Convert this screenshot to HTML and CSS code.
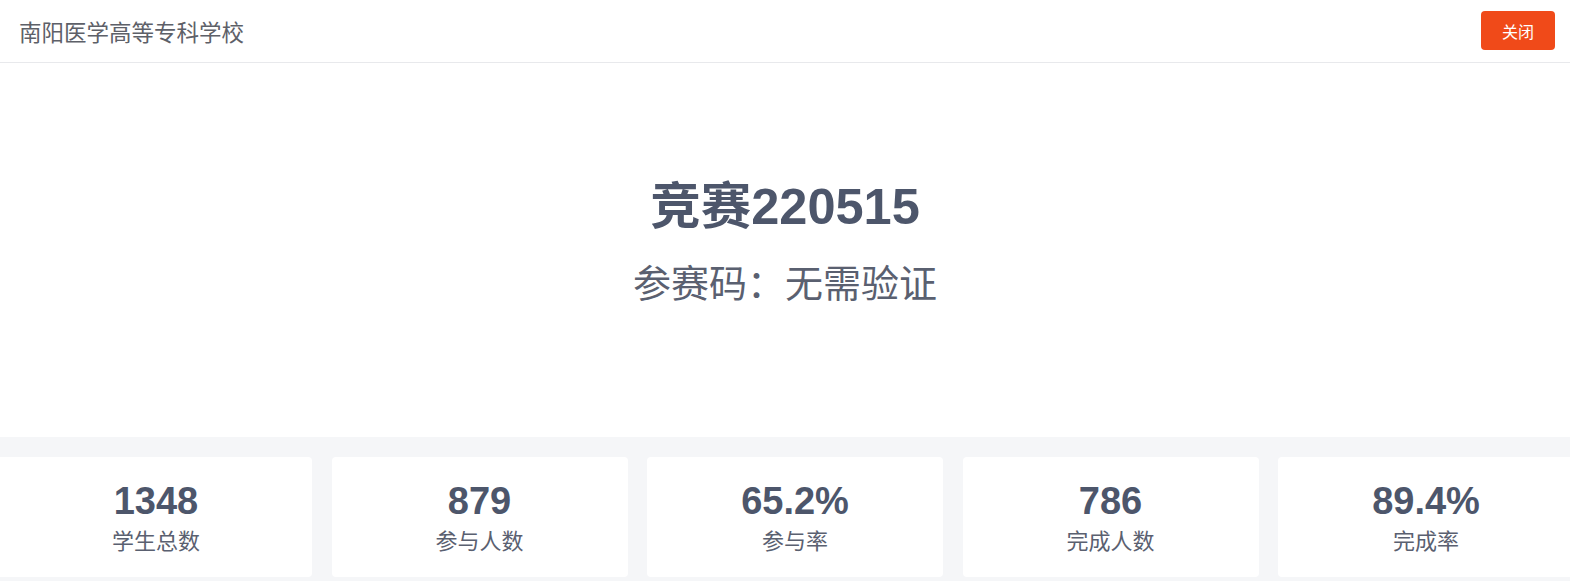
FILE: index.html
```html
<!DOCTYPE html>
<html>
    <head>
        <meta charset="utf-8">
        <title>竞赛220515</title>
        <link rel="stylesheet" href="styles.css">
    </head>
    <body>
        <div class="main-container">
            <div class="header">
                <div class="school">南阳医学高等专科学校</div>
                <button class="close-btn">关闭</button>
            </div>
            <div class="hero">
                <h1 class="contest-name">竞赛220515</h1>
                <div class="contest-code">参赛码：无需验证</div>
            </div>
            <div class="stats">
                <div class="stat-card first">
                    <div class="stat-value">1348</div>
                    <div class="stat-label">学生总数</div>
                </div>
                <div class="stat-card">
                    <div class="stat-value">879</div>
                    <div class="stat-label">参与人数</div>
                </div>
                <div class="stat-card">
                    <div class="stat-value">65.2%</div>
                    <div class="stat-label">参与率</div>
                </div>
                <div class="stat-card">
                    <div class="stat-value">786</div>
                    <div class="stat-label">完成人数</div>
                </div>
                <div class="stat-card">
                    <div class="stat-value">89.4%</div>
                    <div class="stat-label">完成率</div>
                </div>
            </div>
        </div>
    </body>
</html>
```

FILE: styles.css
```css
body {
    margin: 0;
    padding: 0;
    font-family: "Liberation Sans", "Noto Sans CJK SC", sans-serif;
    background-color: #fff;
    overflow: hidden;
}
.main-container {
    display: flex;
    flex-direction: column;
    height: 100vh;
}
.header {
    height: 62px;
    display: flex;
    align-items: center;
    justify-content: space-between;
    padding: 0 15px 0 19px;
    border-bottom: 1px solid #e8e9ec;
}
.school {
    font-size: 22.5px;
    color: #5d6068;
}
.close-btn {
    width: 74px;
    height: 39px;
    background-color: #f04a19;
    color: #fff;
    border: none;
    border-radius: 4px;
    font-family: inherit;
    font-size: 16px;
    margin-top: -1px;
    cursor: pointer;
}
.hero {
    height: 357px;
    padding-bottom: 17px;
    display: flex;
    flex-direction: column;
    align-items: center;
    justify-content: center;
}
.contest-name {
    margin: 0;
    font-size: 50.5px;
    font-weight: bold;
    color: #4d566b;
    line-height: 60px;
}
.contest-code {
    margin-top: 25px;
    font-size: 38px;
    color: #5a6070;
    line-height: 44px;
}
.stats {
    flex: 1;
    background-color: #f5f6f8;
    padding-top: 20px;
    display: grid;
    grid-template-columns: 312px repeat(4, 296px);
    column-gap: 19.5px;
    align-content: start;
}
.stat-card {
    background-color: #fff;
    border-radius: 4px;
    height: 120px;
    display: flex;
    flex-direction: column;
    align-items: center;
    justify-content: center;
}
.stat-card.first {
    border-radius: 0 4px 4px 0;
}
.stat-value {
    font-size: 38px;
    font-weight: bold;
    color: #4d566b;
    line-height: 44px;
    margin-top: 2px;
}
.stat-label {
    font-size: 22px;
    color: #5a6070;
    line-height: 32px;
    margin-top: 3px;
}
```
